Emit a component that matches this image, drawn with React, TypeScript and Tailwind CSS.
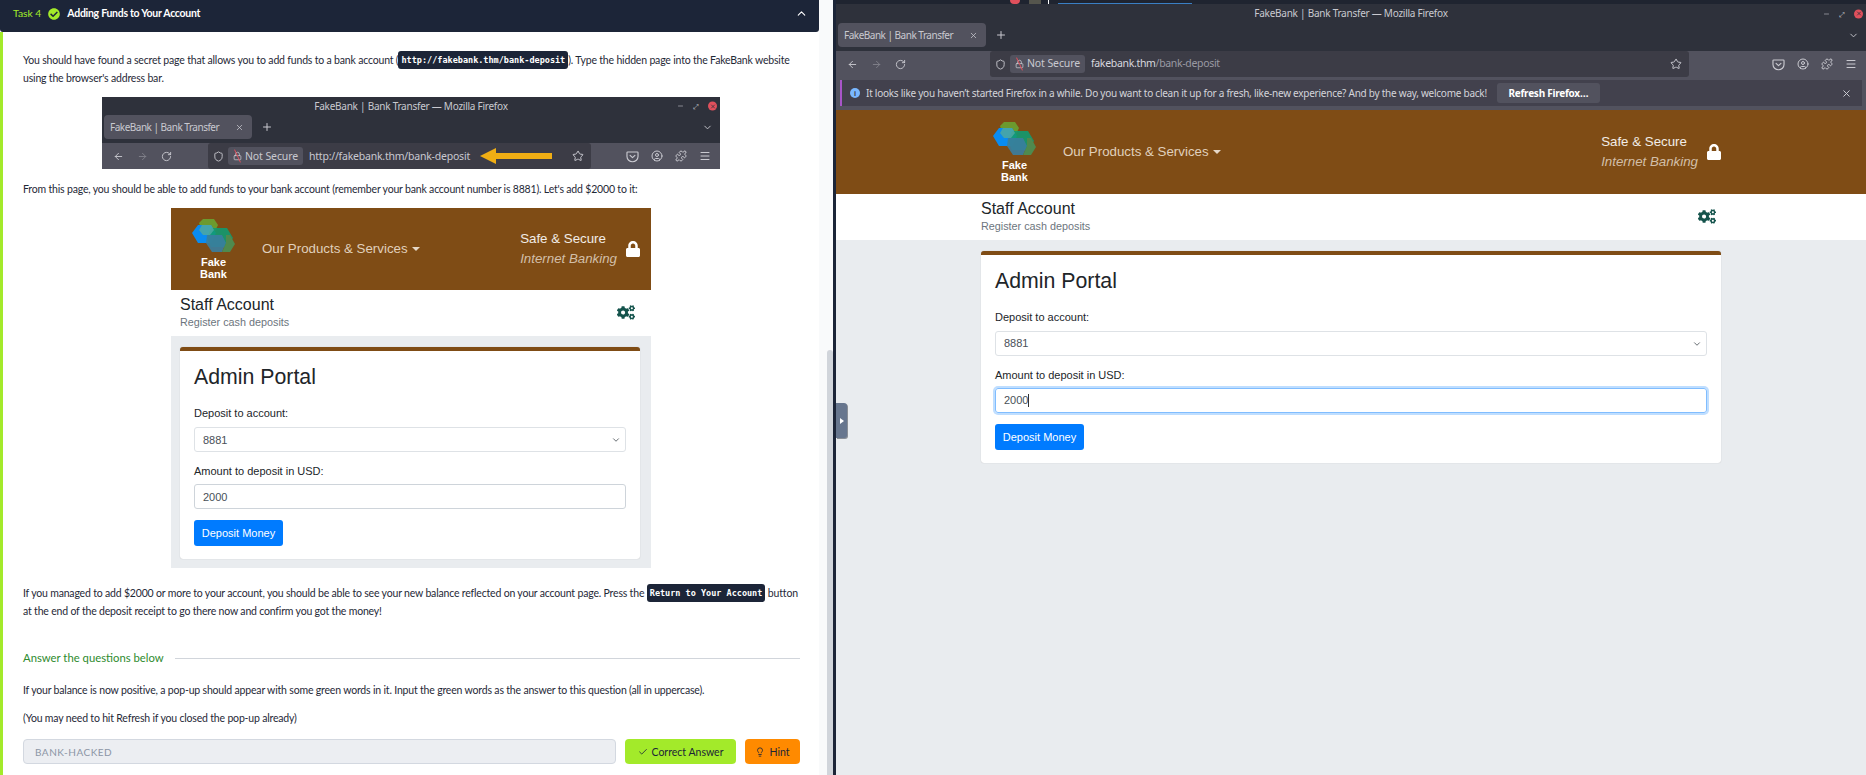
import React from 'react';
import {
  ArrowLeft,
  ArrowRight,
  Check,
  ChevronDown,
  ChevronUp,
  CircleUser,
  Lightbulb,
  Lock,
  Menu,
  Minus,
  Plus,
  Puzzle,
  RotateCw,
  Shield,
  Star,
  X,
} from 'lucide-react';
import { FaCheckCircle, FaCogs, FaLock } from 'react-icons/fa';

const PocketIcon = () => (
  <svg viewBox="0 0 16 16" className="h-[13px] w-[13px]" fill="none" stroke="currentColor" strokeWidth="1.4">
    <path d="M2 2.5h12a.8.8 0 0 1 .8.8V8a6.8 6.5 0 0 1-13.6 0V3.300a.8.8 0 0 1 .8-.8z" />
    <path d="M5 6.500l3 3 3-3" strokeLinecap="round" strokeLinejoin="round" />
  </svg>
);

const BankLogo = () => (
  <svg viewBox="0 0 43 33" className="h-[33px] w-[43px]">
    <polygon points="7,4 11,0 22,0 26,6 22,14 11,14" fill="#6c9a2e" />
    <polygon points="0,14 6,6 19,6 24,14 19,24 6,24" fill="#0a8cf0" />
    <polygon points="19,9 35,9 41,19 35,28 19,28 15,19" fill="#129a70" opacity="0.9" />
    <polygon points="15,16 30,16 34,24 30,33 20,33 14,24" fill="#3a7ea0" opacity="0.9" />
    <polygon points="34,16 38,16 43,25 38,33 30,33 34,24" fill="#4f8a4e" />
    <polygon points="10,6 19,6 22,11 18,16 11,16 7,11" fill="#4fa8a0" opacity="0.85" />
  </svg>
);

interface FirefoxBarProps {
  url: React.ReactNode;
  controlsClass: string;
  toolsClass: string;
  titleClass: string;
  tabRowClass: string;
}

// browser chrome, used for the small screenshot on the left and the real window on the right
const FirefoxBar: React.FC<FirefoxBarProps> = ({ url, controlsClass, toolsClass, titleClass, tabRowClass }) => (
  <div className="font-['Noto_Sans',sans-serif] text-[#c9c9d0]">
    <div className={`relative flex items-center justify-center bg-[#2e313b] text-[10px] tracking-[-0.25px] ${titleClass}`}>
      <span>FakeBank | Bank Transfer — Mozilla Firefox</span>
      <div className="absolute right-[3px] top-1/2 flex -translate-y-1/2 items-center gap-[9px]">
        <Minus className="h-[7px] w-[7px]" />
        <span className="text-[7px] leading-none">⤢</span>
        <span className="flex h-[9px] w-[9px] items-center justify-center rounded-full bg-[#e0505c]">
          <X className="h-[6px] w-[6px] text-[#2e313b]" strokeWidth={3} />
        </span>
      </div>
    </div>
    <div className={`flex items-start bg-[#2e313b] pl-[2px] pr-[7px] ${tabRowClass}`}>
      <div className="flex h-[24px] w-[148px] items-center justify-between rounded-[4px] bg-[#52525e] pl-[6px] pr-[8px] text-[10px]">
        <span className="whitespace-nowrap tracking-[-0.5px]">FakeBank | Bank Transfer</span>
        <X className="h-[9px] w-[9px]" />
      </div>
      <Plus className="ml-[9px] mt-[6px] h-[12px] w-[12px]" />
      <ChevronDown className="ml-auto mt-[7px] h-[11px] w-[11px]" />
    </div>
    <div className="flex h-[26px] items-stretch bg-[#52525e]">
      <div className={`flex items-center gap-[13px] pl-[11px] ${controlsClass}`}>
        <ArrowLeft className="h-[11px] w-[11px]" />
        <ArrowRight className="h-[11px] w-[11px] opacity-40" />
        <RotateCw className="h-[11px] w-[11px]" />
      </div>
      <div className="flex flex-1 items-center rounded-[3px] bg-[#3c3c46] pl-[5px] pr-[7px] text-[10.5px]">
        <Shield className="h-[11px] w-[11px]" />
        <span className="ml-[4px] flex h-[18px] w-[75px] items-center justify-center gap-[3px] rounded-[3px] bg-[#52525e]">
          <span className="relative flex">
            <Lock className="h-[12px] w-[9px]" />
            <span className="absolute left-[4px] top-[-1px] h-[14px] w-px -rotate-[25deg] bg-[#e0505c]" />
          </span>
          <span className="whitespace-nowrap tracking-[-0.1px]">Not Secure</span>
        </span>
        {url}
        <Star className="ml-auto h-[12px] w-[12px]" />
      </div>
      <div className={`flex items-center justify-end gap-[12px] pr-[9px] ${toolsClass}`}>
        <PocketIcon />
        <CircleUser className="h-[12px] w-[12px]" />
        <Puzzle className="h-[12px] w-[12px]" />
        <Menu className="h-[12px] w-[12px]" />
      </div>
    </div>
  </div>
);

interface BankPageProps {
  container: string;
  heroClass: string;
  focused?: boolean;
  outerClass: string;
}

// the FakeBank deposit page, both copies share the same inner layout
const BankPage: React.FC<BankPageProps> = ({ container, heroClass, focused, outerClass }) => (
  <div className={`bg-[#e9ecef] font-['Liberation_Sans',sans-serif] text-[#212529] ${outerClass}`}>
    <div className={`bg-[#7f4c15] ${heroClass}`}>
      <div className={`flex h-full items-center ${container}`}>
        <div className="ml-[12px] flex w-[43px] flex-col items-center">
          <BankLogo />
          <div className="mt-[4px] text-center text-[11px] font-bold leading-[12px] text-white">
            Fake
            <br />
            Bank
          </div>
        </div>
        <div className="ml-[27px] flex items-center gap-[4px] text-[13.3px] text-[#e0d0bc]">
          Our Products &amp; Services
          <span className="h-0 w-0 border-x-[4px] border-t-[4px] border-x-transparent border-t-[#e6d8c8]" />
        </div>
        <div className="ml-auto text-[13.3px] leading-[20px]">
          <div className="text-white/90">Safe &amp; Secure</div>
          <div className="italic text-[#d2bfa8]">Internet Banking</div>
        </div>
        <FaLock className="ml-[9px] h-[16px] w-[14px] text-white" />
      </div>
    </div>
    <div className="bg-white">
      <div className={`flex h-[46px] items-center justify-between pb-[2px] pr-[5px] ${container}`}>
        <div>
          <div className="text-[16px] leading-[20px]">Staff Account</div>
          <div className="text-[10.8px] leading-[14px] text-[#6c757d]">Register cash deposits</div>
        </div>
        <FaCogs className="h-[15px] w-[18px] text-[#14534c]" />
      </div>
    </div>
    <div className={`pt-[11px] ${container}`}>
      <div className="rounded-[3px] border-t-[4px] border-[#7f4c15] bg-white px-[14px] pb-[13px] pt-[11px] shadow-[0_0_1px_rgba(0,0,0,0.25)]">
        <h3 className="text-[21.3px] leading-[30px]">Admin Portal</h3>
        <label className="mt-[13px] block text-[11px] leading-[16px]">Deposit to account:</label>
        <div className="mt-[6px] flex h-[25px] items-center justify-between rounded-[3px] border border-[#dee2e6] px-[8px] text-[11px] text-[#495057]">
          <span>8881</span>
          <ChevronDown className="mr-[-4px] h-[10px] w-[10px]" />
        </div>
        <label className="mt-[11px] block text-[11px] leading-[16px]">Amount to deposit in USD:</label>
        {focused ? (
          <div className="mt-[5px] flex h-[25px] items-center rounded-[3px] border border-[#80bdff] px-[8px] text-[11px] text-[#495057] shadow-[0_0_0_2px_rgba(0,123,255,0.25)]">
            2000
            <span className="h-[13px] w-px bg-[#333]" />
          </div>
        ) : (
          <div className="mt-[5px] flex h-[25px] items-center rounded-[3px] border border-[#ced4da] px-[8px] text-[11px] text-[#495057]">
            2000
          </div>
        )}
        <button className="mt-[11px] flex h-[26px] w-[89px] items-center justify-center rounded-[3px] bg-[#007bff] text-[11px] text-white">
          Deposit Money
        </button>
      </div>
    </div>
  </div>
);

const Chip: React.FC<{ children: React.ReactNode }> = ({ children }) => (
  <code className="inline-block rounded-[3px] bg-[#1c2538] px-[3px] align-top font-['DejaVu_Sans_Mono',monospace] text-[8.5px] font-bold leading-[18px] tracking-normal text-white">
    {children}
  </code>
);

export default function App() {
  return (
    <div className="flex h-[775px] w-full overflow-hidden bg-white">
      {/* THM task column */}
      <div className="flex w-[833px] shrink-0 bg-[#f9fafb]">
        <div className="flex w-[819px] shrink-0 flex-col bg-white font-['Lato',sans-serif] text-[#1f2937]">
          <div className="flex h-[32px] shrink-0 items-center rounded-b-[3px] bg-[#1c2538] pb-[5px] pl-[13px] pr-[11px] text-[10.3px]">
            <span className="text-[#a3ea2a]">Task 4</span>
            <FaCheckCircle className="ml-[7px] h-[12px] w-[12px] text-[#a3ea2a]" />
            <span className="ml-[7px] text-[10.5px] font-bold tracking-[-0.28px] text-white">Adding Funds to Your Account</span>
            <ChevronUp className="ml-auto h-[13px] w-[13px] text-white" />
          </div>
          <div className="flex-1 border-l-[3px] border-[#a3ea2a] pl-[20px] pr-[19px] pt-[19px] text-[10.5px] leading-[18px] tracking-[-0.18px]">
            <p>
              You should have found a secret page that allows you to add funds to a bank account (
              <Chip>http://fakebank.thm/bank-deposit</Chip>). Type the hidden page into the FakeBank website using the
              browser's address bar.
            </p>
            <div className="ml-[79px] mt-[10px] w-[618px] tracking-normal">
              <FirefoxBar
                titleClass="h-[18px]"
                tabRowClass="h-[28px]"
                controlsClass="w-[106px]"
                toolsClass="w-[129px]"
                url={
                  <>
                    <span className="ml-[6px] whitespace-nowrap tracking-[-0.22px]">http://fakebank.thm/bank-deposit</span>
                    <svg viewBox="0 0 72 16" className="ml-[10px] h-[16px] w-[72px]">
                      <path d="M0 8 L16 0 V5 H72 V11 H16 V16 Z" fill="#f0ae14" />
                    </svg>
                  </>
                }
              />
            </div>
            <p className="mt-[11px]">
              From this page, you should be able to add funds to your bank account (remember your bank account number is
              8881). Let's add $2000 to it:
            </p>
            <div className="ml-[148px] mt-[10px] w-[480px] tracking-normal">
              <BankPage container="ml-[9px] w-[460px]" heroClass="h-[82px]" outerClass="pb-[9px]" />
            </div>
            <p className="mt-[16px]">
              If you managed to add $2000 or more to your account, you should be able to see your new balance reflected on
              your account page. Press the <Chip>Return to Your Account</Chip> button at the end of the deposit receipt to
              go there now and confirm you got the money!
            </p>
            <div className="mt-[29px] flex items-center gap-[11px]">
              <span className="whitespace-nowrap text-[11.3px] tracking-normal text-[#2e8b2e]">Answer the questions below</span>
              <span className="h-px flex-1 bg-[#d1d5db]" />
            </div>
            <p className="mt-[14px]">
              If your balance is now positive, a pop-up should appear with some green words in it. Input the green words as
              the answer to this question (all in uppercase).
            </p>
            <p className="mt-[10px]">(You may need to hit Refresh if you closed the pop-up already)</p>
            <div className="mt-[12px] flex h-[25px] gap-[9px] tracking-normal">
              <div className="flex flex-1 items-center rounded-[4px] border border-[#d3d8e0] bg-[#eceef2] px-[11px] text-[10px] tracking-[0.5px] text-[#8b95a5]">
                BANK-HACKED
              </div>
              <button className="flex w-[111px] items-center justify-center gap-[4px] rounded-[4px] bg-[#a3ea2a] text-[#1c2538]">
                <Check className="h-[10px] w-[10px]" />
                Correct Answer
              </button>
              <button className="flex w-[55px] items-center justify-center gap-[4px] rounded-[4px] bg-[#ff8a00] text-[#1c2538]">
                <Lightbulb className="h-[10px] w-[10px]" />
                Hint
              </button>
            </div>
          </div>
        </div>
        <div className="flex flex-1 justify-end pt-[350px]">
          <div className="w-[6px] rounded-t-[3px] bg-[#d1d5db]" />
        </div>
      </div>

      {/* split view divider + firefox window */}
      <div className="w-[3px] shrink-0 bg-[#1c2538]" />
      <div className="relative flex min-w-0 flex-1 flex-col bg-[#e9ecef]">
        <div className="flex h-[4px] items-start bg-[#1f2430] pl-[174px]">
          <span className="h-[4px] w-[10px] rounded-b-full bg-[#e0505c]" />
          <span className="ml-[9px] h-[4px] w-[12px] bg-[#55554d]" />
          <span className="ml-[7px] h-[4px] w-px bg-white" />
          <span className="ml-[9px] h-[4px] w-[134px] border-b border-[#3a7fc4]" />
        </div>
        <FirefoxBar
          titleClass="h-[19px]"
          tabRowClass="h-[28px]"
          controlsClass="w-[154px]"
          toolsClass="w-[177px]"
          url={
            <span className="ml-[6px] tracking-[-0.32px] text-[#d8d8de]">
              fakebank.thm<span className="text-[#9a9aa3]">/bank-deposit</span>
            </span>
          }
        />
        <div className="bg-[#52525e] px-[4px] pb-[4px] pt-[3px] font-['Noto_Sans',sans-serif]">
          <div className="flex h-[26px] items-center border-l-[2px] border-[#a855c8] bg-[#42414d] pl-[8px] pr-[10px] text-[10px] tracking-[-0.25px] text-[#d4d4da]">
            <span className="flex h-[10px] w-[10px] items-center justify-center rounded-full bg-[#7ab8ff] text-[7px] font-bold leading-none text-[#42414d]">
              i
            </span>
            <span className="ml-[6px] whitespace-nowrap">
              It looks like you haven’t started Firefox in a while. Do you want to clean it up for a fresh, like-new
              experience? And by the way, welcome back!
            </span>
            <button className="ml-[10px] flex h-[20px] w-[103px] items-center justify-center rounded-[3px] bg-[#52525e] font-bold text-white">
              Refresh Firefox…
            </button>
            <X className="ml-auto h-[11px] w-[11px]" />
          </div>
        </div>
        <BankPage container="mx-auto w-[740px]" heroClass="h-[84px]" outerClass="flex-1" focused />
        {/* collapse handle of the split view */}
        <div className="absolute left-0 top-[403px] flex h-[35px] w-[11px] items-center justify-center rounded-r-[3px] bg-[#67768e] shadow-[1px_1px_0_#8a8f96]">
          <span className="h-0 w-0 border-y-[3px] border-l-[4px] border-y-transparent border-l-white" />
        </div>
      </div>
    </div>
  );
}
